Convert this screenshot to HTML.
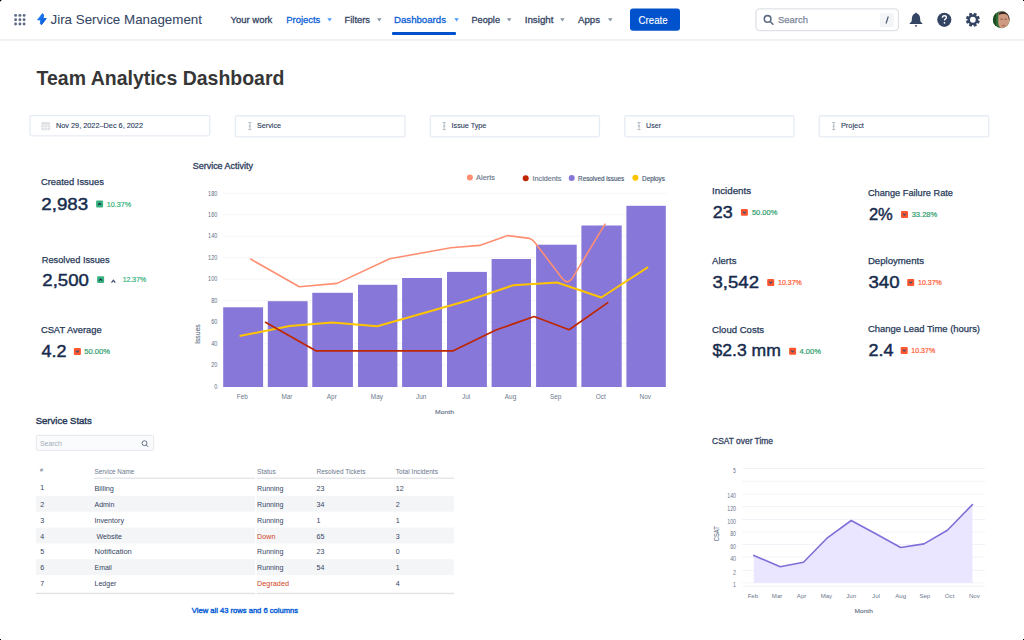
<!DOCTYPE html>
<html><head><meta charset="utf-8">
<style>
html,body{margin:0;padding:0;background:#fff;width:1024px;height:640px;overflow:hidden}
svg{display:block;font-family:"Liberation Sans",sans-serif}
</style></head>
<body>
<svg width="1024" height="640" viewBox="0 0 1024 640">
<defs>
<linearGradient id="bolt" x1="0" y1="0" x2="1" y2="1"><stop offset="0" stop-color="#2684FF"/><stop offset="1" stop-color="#0052CC"/></linearGradient>
</defs>
<rect width="1024" height="640" fill="#fff"/>
<rect x="0" y="39.3" width="1024" height="1.4" fill="#EBECF0"/>
<rect x="0" y="40.7" width="1024" height="0.6" fill="#F6F7F9"/>
<g fill="#5E6C84">
<circle cx="15.6" cy="15.4" r="1.45"/>
<circle cx="19.9" cy="15.4" r="1.45"/>
<circle cx="24.1" cy="15.4" r="1.45"/>
<circle cx="15.6" cy="19.75" r="1.45"/>
<circle cx="19.9" cy="19.75" r="1.45"/>
<circle cx="24.1" cy="19.75" r="1.45"/>
<circle cx="15.6" cy="24.0" r="1.45"/>
<circle cx="19.9" cy="24.0" r="1.45"/>
<circle cx="24.1" cy="24.0" r="1.45"/>
</g>
<path d="M42.4 13.6 L43.7 14.8 L43.1 18.5 L46.3 18.5 L41.5 24.8 L40.3 23.4 L40.8 19.9 L37.6 19.9 Z" fill="url(#bolt)" stroke="url(#bolt)" stroke-width="0.9" stroke-linejoin="round"/>
<text x="50.5" y="23.8" font-size="13" fill="#344563" stroke="#344563" stroke-width="0.05" textLength="151.5" lengthAdjust="spacingAndGlyphs">Jira Service Management</text>
<text x="230.6" y="22.85" font-size="9.6" fill="#344563" stroke="#344563" stroke-width="0.3" textLength="41.7" lengthAdjust="spacingAndGlyphs">Your work</text>
<text x="286.3" y="22.85" font-size="9.6" fill="#0C5FD6" stroke="#0C5FD6" stroke-width="0.3" textLength="34" lengthAdjust="spacingAndGlyphs">Projects</text>
<path d="M327.3 18.3 h4.6 l-2.3 3.3z" fill="#4C9AFF"/>
<text x="344.5" y="22.85" font-size="9.6" fill="#344563" stroke="#344563" stroke-width="0.3" textLength="25.5" lengthAdjust="spacingAndGlyphs">Filters</text>
<path d="M377.0 18.3 h4.6 l-2.3 3.3z" fill="#8993A4"/>
<text x="394" y="22.85" font-size="9.6" fill="#0C5FD6" stroke="#0C5FD6" stroke-width="0.3" textLength="52" lengthAdjust="spacingAndGlyphs">Dashboards</text>
<path d="M454.3 18.3 h4.6 l-2.3 3.3z" fill="#4C9AFF"/>
<text x="471.5" y="22.85" font-size="9.6" fill="#344563" stroke="#344563" stroke-width="0.3" textLength="28.5" lengthAdjust="spacingAndGlyphs">People</text>
<path d="M506.90000000000003 18.3 h4.6 l-2.3 3.3z" fill="#8993A4"/>
<text x="524.7" y="22.85" font-size="9.6" fill="#344563" stroke="#344563" stroke-width="0.3" textLength="28.8" lengthAdjust="spacingAndGlyphs">Insight</text>
<path d="M560.0999999999999 18.3 h4.6 l-2.3 3.3z" fill="#8993A4"/>
<text x="578" y="22.85" font-size="9.6" fill="#344563" stroke="#344563" stroke-width="0.3" textLength="22" lengthAdjust="spacingAndGlyphs">Apps</text>
<path d="M608.0 18.3 h4.6 l-2.3 3.3z" fill="#8993A4"/>
<rect x="392" y="32" width="64" height="3" rx="1" fill="#0052CC"/>
<rect x="630" y="8.5" width="50" height="22.3" rx="3" fill="#0052CC"/>
<text x="638.6" y="23.6" font-size="10" fill="#fff" stroke="#fff" stroke-width="0.12" textLength="29" lengthAdjust="spacingAndGlyphs">Create</text>
<rect x="755.9" y="8.8" width="142.6" height="21.8" rx="4" fill="#fff" stroke="#DFE1E6" stroke-width="1.3"/>
<circle cx="767.6" cy="18.9" r="3.3" fill="none" stroke="#5E6C84" stroke-width="1.6"/>
<path d="M770.2 21.5 L772.9 24.2" stroke="#5E6C84" stroke-width="1.6" stroke-linecap="round"/>
<text x="778" y="23" font-size="9.8" fill="#7A869A" stroke="#7A869A" stroke-width="0.25" textLength="30" lengthAdjust="spacingAndGlyphs">Search</text>
<rect x="880" y="13" width="14" height="14" rx="2" fill="#F4F5F7"/>
<path d="M888.3 16.5 L886 23.5" stroke="#42526E" stroke-width="1.1"/>
<g fill="#344563">
<path d="M916 12.4 L917.1 13.6 C918.9 14.3 919.9 15.9 920.1 18.2 L920.4 21.6 L922.3 23.3 L922.3 24.1 L909.7 24.1 L909.7 23.3 L911.6 21.6 L911.9 18.2 C912.1 15.9 913.1 14.3 914.9 13.6 Z"/>
<rect x="914.9" y="25.2" width="2.2" height="1.3" rx="0.3"/>
<circle cx="944.3" cy="19.8" r="7.1"/>
<path d="M978.13 20.26 L979.88 21.05 L978.74 23.80 L976.94 23.12 L976.22 23.84 L976.90 25.64 L974.15 26.78 L973.36 25.03 L972.34 25.03 L971.55 26.78 L968.80 25.64 L969.48 23.84 L968.76 23.12 L966.96 23.80 L965.82 21.05 L967.57 20.26 L967.57 19.24 L965.82 18.45 L966.96 15.70 L968.76 16.38 L969.48 15.66 L968.80 13.86 L971.55 12.72 L972.34 14.47 L973.36 14.47 L974.15 12.72 L976.90 13.86 L976.22 15.66 L976.94 16.38 L978.74 15.70 L979.88 18.45 L978.13 19.24Z"/>
</g>
<circle cx="972.85" cy="19.75" r="2.9" fill="#fff"/>
<path d="M942.4 17.7 c0 -1.3 0.9 -2.0 2.0 -2.0 c1.2 0 2.0 0.8 2.0 1.8 c0 1.3 -1.9 1.5 -1.9 2.9" fill="none" stroke="#fff" stroke-width="1.35"/>
<circle cx="944.5" cy="22.8" r="0.85" fill="#fff"/>
<clipPath id="av"><circle cx="1001.3" cy="19.75" r="8.4"/></clipPath>
<g clip-path="url(#av)">
<rect x="992" y="11" width="19" height="18" fill="#2E6B34"/>
<rect x="992" y="11" width="4" height="18" fill="#1E4A24"/>
<path d="M998.3 14 C999 12.3 1001 11.6 1003.5 11.6 C1007 11.6 1009.6 13.5 1009.8 17 L1009.8 22 C1009.5 26 1006.5 28.6 1003 28.6 C1000 28.6 998.3 26 998.2 22 Z" fill="#CF9A80"/>
<path d="M998.3 15.5 C998.8 12.5 1001 11.3 1003.8 11.3 C1007.3 11.3 1009.8 13.3 1010 17.5 L1010 19.5 L1008.6 19 C1008.5 16.2 1007.5 14.3 1004.8 14.1 C1002 14 999.5 14.3 998.3 15.5Z" fill="#3A2A24"/>
<ellipse cx="1003.6" cy="25.6" rx="2" ry="0.8" fill="#B06E62"/>
<path d="M1000.5 19.2 h2 M1004.6 19.2 h2" stroke="#5A3A30" stroke-width="0.8"/>
</g>
<text x="36.6" y="85.2" font-size="20.6" fill="#363636" font-weight="bold" textLength="247.8" lengthAdjust="spacingAndGlyphs">Team Analytics Dashboard</text>
<g fill="#fff" stroke="#E6ECF3" stroke-width="1.3">
<rect x="29.95" y="115.55" width="179.8" height="20.3" rx="1.5"/>
<rect x="235.35" y="115.75" width="169.6" height="21.1" rx="1.5"/>
<rect x="430.35" y="115.75" width="169.1" height="21.1" rx="1.5"/>
<rect x="624.85" y="115.75" width="169.1" height="21.1" rx="1.5"/>
<rect x="819.15" y="115.75" width="169.6" height="21.1" rx="1.5"/>
</g>
<text x="56" y="128.3" font-size="7.8" fill="#253858" stroke="#253858" stroke-width="0.1" textLength="87" lengthAdjust="spacingAndGlyphs">Nov 29, 2022–Dec 6, 2022</text>
<text x="257" y="128.1" font-size="7.8" fill="#253858" stroke="#253858" stroke-width="0.1" textLength="24" lengthAdjust="spacingAndGlyphs">Service</text>
<text x="451.5" y="128.1" font-size="7.8" fill="#253858" stroke="#253858" stroke-width="0.1" textLength="34.9" lengthAdjust="spacingAndGlyphs">Issue Type</text>
<text x="646.1" y="128.1" font-size="7.8" fill="#253858" stroke="#253858" stroke-width="0.1" textLength="14.9" lengthAdjust="spacingAndGlyphs">User</text>
<text x="840.9" y="128.1" font-size="7.8" fill="#253858" stroke="#253858" stroke-width="0.1" textLength="23" lengthAdjust="spacingAndGlyphs">Project</text>
<rect x="41.3" y="122.3" width="8.8" height="8" rx="1.3" fill="#DCDFE4"/>
<path d="M41.3 124.9 h8.8 M44.2 124.9 v5.4 M47.2 124.9 v5.4 M41.3 127.6 h8.8" stroke="#fff" stroke-width="0.55"/>
<path d="M43.3 121.6 v1.6 M48.1 121.6 v1.6" stroke="#DCDFE4" stroke-width="0.9"/>
<g stroke="#A5ADBA" stroke-width="0.8" fill="none">
<path d="M249.9 122.6 v7 M248.3 122.6 h3.2 M248.3 129.6 h3.2 M248.70000000000002 126.1 h2.4"/>
<path d="M444.2 122.6 v7 M442.59999999999997 122.6 h3.2 M442.59999999999997 129.6 h3.2 M443.0 126.1 h2.4"/>
<path d="M639 122.6 v7 M637.4 122.6 h3.2 M637.4 129.6 h3.2 M637.8 126.1 h2.4"/>
<path d="M833.7 122.6 v7 M832.1 122.6 h3.2 M832.1 129.6 h3.2 M832.5 126.1 h2.4"/>
</g>
<text x="192.8" y="169" font-size="8.6" fill="#344563" stroke="#344563" stroke-width="0.35" textLength="60.1" lengthAdjust="spacingAndGlyphs">Service Activity</text>
<g fill="#F4F5F7">
<rect x="223" y="385.90" width="443" height="1"/>
<rect x="223" y="364.43" width="443" height="1"/>
<rect x="223" y="342.97" width="443" height="1"/>
<rect x="223" y="321.50" width="443" height="1"/>
<rect x="223" y="300.04" width="443" height="1"/>
<rect x="223" y="278.57" width="443" height="1"/>
<rect x="223" y="257.10" width="443" height="1"/>
<rect x="223" y="235.64" width="443" height="1"/>
<rect x="223" y="214.17" width="443" height="1"/>
<rect x="223" y="192.71" width="443" height="1"/>
</g>
<text x="217.3" y="388.70" font-size="6.6" fill="#6B778C" stroke="#6B778C" stroke-width="0.05" text-anchor="end" textLength="3.07" lengthAdjust="spacingAndGlyphs">0</text>
<text x="217.3" y="367.23" font-size="6.6" fill="#6B778C" stroke="#6B778C" stroke-width="0.05" text-anchor="end" textLength="6.14" lengthAdjust="spacingAndGlyphs">20</text>
<text x="217.3" y="345.77" font-size="6.6" fill="#6B778C" stroke="#6B778C" stroke-width="0.05" text-anchor="end" textLength="6.14" lengthAdjust="spacingAndGlyphs">40</text>
<text x="217.3" y="324.30" font-size="6.6" fill="#6B778C" stroke="#6B778C" stroke-width="0.05" text-anchor="end" textLength="6.14" lengthAdjust="spacingAndGlyphs">60</text>
<text x="217.3" y="302.84" font-size="6.6" fill="#6B778C" stroke="#6B778C" stroke-width="0.05" text-anchor="end" textLength="6.14" lengthAdjust="spacingAndGlyphs">80</text>
<text x="217.3" y="281.37" font-size="6.6" fill="#6B778C" stroke="#6B778C" stroke-width="0.05" text-anchor="end" textLength="9.21" lengthAdjust="spacingAndGlyphs">100</text>
<text x="217.3" y="259.90" font-size="6.6" fill="#6B778C" stroke="#6B778C" stroke-width="0.05" text-anchor="end" textLength="9.21" lengthAdjust="spacingAndGlyphs">120</text>
<text x="217.3" y="238.44" font-size="6.6" fill="#6B778C" stroke="#6B778C" stroke-width="0.05" text-anchor="end" textLength="9.21" lengthAdjust="spacingAndGlyphs">140</text>
<text x="217.3" y="216.97" font-size="6.6" fill="#6B778C" stroke="#6B778C" stroke-width="0.05" text-anchor="end" textLength="9.21" lengthAdjust="spacingAndGlyphs">160</text>
<text x="217.3" y="195.51" font-size="6.6" fill="#6B778C" stroke="#6B778C" stroke-width="0.05" text-anchor="end" textLength="9.21" lengthAdjust="spacingAndGlyphs">180</text>
<g fill="#8777D9">
<rect x="223.2" y="307.3" width="39.9" height="79.7"/>
<rect x="267.8" y="301.2" width="39.8" height="85.8"/>
<rect x="312.3" y="292.8" width="40.6" height="94.2"/>
<rect x="358" y="284.8" width="39.4" height="102.2"/>
<rect x="402.1" y="278" width="39.9" height="109.0"/>
<rect x="447" y="271.9" width="39.9" height="115.1"/>
<rect x="491.6" y="259" width="39.4" height="128.0"/>
<rect x="536.1" y="244.7" width="40.6" height="142.3"/>
<rect x="581.4" y="225.5" width="40.3" height="161.5"/>
<rect x="626.4" y="205.8" width="39.4" height="181.2"/>
</g>
<text x="242.3" y="398.9" font-size="6.4" fill="#6B778C" text-anchor="middle">Feb</text>
<text x="286.9" y="398.9" font-size="6.4" fill="#6B778C" text-anchor="middle">Mar</text>
<text x="331.8" y="398.9" font-size="6.4" fill="#6B778C" text-anchor="middle">Apr</text>
<text x="376.9" y="398.9" font-size="6.4" fill="#6B778C" text-anchor="middle">May</text>
<text x="421.2" y="398.9" font-size="6.4" fill="#6B778C" text-anchor="middle">Jun</text>
<text x="466.1" y="398.9" font-size="6.4" fill="#6B778C" text-anchor="middle">Jul</text>
<text x="510.5" y="398.9" font-size="6.4" fill="#6B778C" text-anchor="middle">Aug</text>
<text x="555.6" y="398.9" font-size="6.4" fill="#6B778C" text-anchor="middle">Sep</text>
<text x="600.8" y="398.9" font-size="6.4" fill="#6B778C" text-anchor="middle">Oct</text>
<text x="645.3" y="398.9" font-size="6.4" fill="#6B778C" text-anchor="middle">Nov</text>
<text x="435.1" y="413.9" font-size="6.2" fill="#6B778C" stroke="#6B778C" stroke-width="0.15" textLength="18.8" lengthAdjust="spacingAndGlyphs">Month</text>
<text transform="translate(199.8 334.2) rotate(-90)" font-size="6.7" fill="#6B778C" stroke="#6B778C" stroke-width="0.15" text-anchor="middle">Issues</text>
<path d="M250.2,258.8 L299.3,286.7 L337,283.4 L389.7,258.8 L450.8,247.8 L479.6,245.4 L507.8,235.6 L529.5,238.4 Q532.5,239.2 534.5,242 L562.3,278.6 Q567.3,285.2 572.2,278.4 L605.3,223.7" fill="none" stroke="#FF8F73" stroke-width="1.6" stroke-linejoin="round"/>
<polyline points="239.6,336.1 289.6,326 332.2,322.5 377.2,326.3 468.1,300.5 513.2,285.3 557.2,282.5 601.3,297.5 648,267.2" fill="none" stroke="#FFC400" stroke-width="2" stroke-linejoin="round"/>
<polyline points="265,322 315.8,350.8 453.2,350.8 495.9,330 534.2,316.5 569.1,329.7 608.2,302.4" fill="none" stroke="#BF2600" stroke-width="1.7" stroke-linejoin="round"/>
<circle cx="469.9" cy="177.5" r="3" fill="#FF8F73"/>
<text x="476.1" y="179.8" font-size="7" fill="#6B778C" stroke="#6B778C" stroke-width="0.15" textLength="18.8" lengthAdjust="spacingAndGlyphs">Alerts</text>
<circle cx="525.7" cy="178.2" r="3" fill="#BF2600"/>
<text x="532.5" y="180.9" font-size="7" fill="#6B778C" stroke="#6B778C" stroke-width="0.15" textLength="29" lengthAdjust="spacingAndGlyphs">Incidents</text>
<circle cx="571.7" cy="177.9" r="3" fill="#8777D9"/>
<text x="578.1" y="180.6" font-size="6.8" fill="#505F79" stroke="#505F79" stroke-width="0.2" textLength="46" lengthAdjust="spacingAndGlyphs">Resolved issues</text>
<circle cx="635.4" cy="177.7" r="3" fill="#FFC400"/>
<text x="642.1" y="180.6" font-size="6.8" fill="#505F79" stroke="#505F79" stroke-width="0.2" textLength="22.8" lengthAdjust="spacingAndGlyphs">Deploys</text>
<text x="40.9" y="185.3" font-size="9.7" fill="#253858" stroke="#253858" stroke-width="0.25" textLength="63" lengthAdjust="spacingAndGlyphs">Created Issues</text>
<text x="41.3" y="209.8" font-size="17.3" fill="#172B4D" stroke="#172B4D" stroke-width="0.45" textLength="46.9" lengthAdjust="spacingAndGlyphs">2,983</text>
<rect x="96.1" y="200.6" width="7" height="6.9" rx="1" fill="#36B37E"/>
<path d="M98.00 204.95 L99.60 203.35 L101.20 204.95" fill="none" stroke="#172B4D" stroke-width="1.1"/>
<text x="106.8" y="206.9" font-size="7.5" fill="#36B37E" stroke="#36B37E" stroke-width="0.2" textLength="24.4" lengthAdjust="spacingAndGlyphs">10.37%</text>
<text x="41.8" y="262.9" font-size="9.7" fill="#253858" stroke="#253858" stroke-width="0.25" textLength="67.8" lengthAdjust="spacingAndGlyphs">Resolved Issues</text>
<text x="42.3" y="286.4" font-size="17.3" fill="#172B4D" stroke="#172B4D" stroke-width="0.45" textLength="46.6" lengthAdjust="spacingAndGlyphs">2,500</text>
<rect x="97.1" y="276.2" width="7" height="6.9" rx="1" fill="#36B37E"/>
<path d="M99.00 280.55 L100.60 278.95 L102.20 280.55" fill="none" stroke="#172B4D" stroke-width="1.1"/>
<text x="122.7" y="282.3" font-size="7.5" fill="#36B37E" stroke="#36B37E" stroke-width="0.2" textLength="23.6" lengthAdjust="spacingAndGlyphs">12.37%</text>
<text x="40.9" y="333" font-size="9.7" fill="#253858" stroke="#253858" stroke-width="0.25" textLength="60.7" lengthAdjust="spacingAndGlyphs">CSAT Average</text>
<text x="41.4" y="357.1" font-size="17.3" fill="#172B4D" stroke="#172B4D" stroke-width="0.45" textLength="25" lengthAdjust="spacingAndGlyphs">4.2</text>
<rect x="73.9" y="348" width="7" height="6.9" rx="1" fill="#FF5630"/>
<path d="M75.80 350.65 L77.40 352.25 L79.00 350.65" fill="none" stroke="#42526E" stroke-width="1.1"/>
<text x="84.2" y="353.7" font-size="7.5" fill="#2E9E6E" stroke="#2E9E6E" stroke-width="0.2" textLength="25.8" lengthAdjust="spacingAndGlyphs">50.00%</text>
<text x="712" y="193.9" font-size="9.7" fill="#253858" stroke="#253858" stroke-width="0.25" textLength="39.1" lengthAdjust="spacingAndGlyphs">Incidents</text>
<text x="712.8" y="218.1" font-size="17.3" fill="#172B4D" stroke="#172B4D" stroke-width="0.45" textLength="19.9" lengthAdjust="spacingAndGlyphs">23</text>
<rect x="740.9" y="208.9" width="7" height="6.9" rx="1" fill="#FF5630"/>
<path d="M742.80 211.55 L744.40 213.15 L746.00 211.55" fill="none" stroke="#42526E" stroke-width="1.1"/>
<text x="751.9" y="215" font-size="7.5" fill="#2E9E6E" stroke="#2E9E6E" stroke-width="0.2" textLength="25.4" lengthAdjust="spacingAndGlyphs">50.00%</text>
<text x="867.9" y="195.7" font-size="9.7" fill="#253858" stroke="#253858" stroke-width="0.25" textLength="85.1" lengthAdjust="spacingAndGlyphs">Change Failure Rate</text>
<text x="868.9" y="220.1" font-size="17.3" fill="#172B4D" stroke="#172B4D" stroke-width="0.45" textLength="23.9" lengthAdjust="spacingAndGlyphs">2%</text>
<rect x="901" y="211" width="7" height="6.9" rx="1" fill="#FF5630"/>
<path d="M902.90 213.65 L904.50 215.25 L906.10 213.65" fill="none" stroke="#42526E" stroke-width="1.1"/>
<text x="911.7" y="216.9" font-size="7.5" fill="#2E9E6E" stroke="#2E9E6E" stroke-width="0.2" textLength="25.5" lengthAdjust="spacingAndGlyphs">33.28%</text>
<text x="712.1" y="263.7" font-size="9.7" fill="#253858" stroke="#253858" stroke-width="0.25" textLength="24.3" lengthAdjust="spacingAndGlyphs">Alerts</text>
<text x="712.5" y="288.1" font-size="17.3" fill="#172B4D" stroke="#172B4D" stroke-width="0.45" textLength="46.5" lengthAdjust="spacingAndGlyphs">3,542</text>
<rect x="767.2" y="279" width="7" height="6.9" rx="1" fill="#FF5630"/>
<path d="M769.10 281.65 L770.70 283.25 L772.30 281.65" fill="none" stroke="#42526E" stroke-width="1.1"/>
<text x="778.1" y="285.3" font-size="7.5" fill="#FF5630" stroke="#FF5630" stroke-width="0.2" textLength="23.7" lengthAdjust="spacingAndGlyphs">10.37%</text>
<text x="867.9" y="263.7" font-size="9.7" fill="#253858" stroke="#253858" stroke-width="0.25" textLength="56.1" lengthAdjust="spacingAndGlyphs">Deployments</text>
<text x="868.5" y="288.1" font-size="17.3" fill="#172B4D" stroke="#172B4D" stroke-width="0.45" textLength="31.1" lengthAdjust="spacingAndGlyphs">340</text>
<rect x="907.2" y="279" width="7" height="6.9" rx="1" fill="#FF5630"/>
<path d="M909.10 281.65 L910.70 283.25 L912.30 281.65" fill="none" stroke="#42526E" stroke-width="1.1"/>
<text x="918.1" y="285.3" font-size="7.5" fill="#FF5630" stroke="#FF5630" stroke-width="0.2" textLength="23.7" lengthAdjust="spacingAndGlyphs">10.37%</text>
<text x="712.1" y="332.6" font-size="9.7" fill="#253858" stroke="#253858" stroke-width="0.25" textLength="52" lengthAdjust="spacingAndGlyphs">Cloud Costs</text>
<text x="712.5" y="356.1" font-size="17.3" fill="#172B4D" stroke="#172B4D" stroke-width="0.45" textLength="68.4" lengthAdjust="spacingAndGlyphs">$2.3 mm</text>
<rect x="789.1" y="347.8" width="7" height="6.9" rx="1" fill="#FF5630"/>
<path d="M791.00 350.45 L792.60 352.05 L794.20 350.45" fill="none" stroke="#42526E" stroke-width="1.1"/>
<text x="799.6" y="353.8" font-size="7.5" fill="#2E9E6E" stroke="#2E9E6E" stroke-width="0.2" textLength="21.3" lengthAdjust="spacingAndGlyphs">4.00%</text>
<text x="867.9" y="332" font-size="9.7" fill="#253858" stroke="#253858" stroke-width="0.25" textLength="112.1" lengthAdjust="spacingAndGlyphs">Change Lead Time (hours)</text>
<text x="868.5" y="356.1" font-size="17.3" fill="#172B4D" stroke="#172B4D" stroke-width="0.45" textLength="25" lengthAdjust="spacingAndGlyphs">2.4</text>
<rect x="900.7" y="347" width="7" height="6.9" rx="1" fill="#FF5630"/>
<path d="M902.60 349.65 L904.20 351.25 L905.80 349.65" fill="none" stroke="#42526E" stroke-width="1.1"/>
<text x="911.3" y="352.9" font-size="7.5" fill="#FF5630" stroke="#FF5630" stroke-width="0.2" textLength="23.9" lengthAdjust="spacingAndGlyphs">10.37%</text>
<path d="M111.5 282.6 L113.4 280.3 L115.3 282.6" fill="none" stroke="#42526E" stroke-width="1.3"/>
<text x="35.7" y="423.7" font-size="9.6" fill="#253858" stroke="#253858" stroke-width="0.4" textLength="56.1" lengthAdjust="spacingAndGlyphs">Service Stats</text>
<rect x="36.3" y="435.3" width="117.3" height="15.1" rx="1.5" fill="#FAFBFC" stroke="#DFE1E6" stroke-width="0.8"/>
<text x="39.9" y="446.2" font-size="7.4" fill="#A5ADBA" textLength="22.1" lengthAdjust="spacingAndGlyphs">Search</text>
<circle cx="144.5" cy="443.2" r="2.45" fill="none" stroke="#505F79" stroke-width="0.85"/><path d="M146.3 445 L147.9 446.6" stroke="#505F79" stroke-width="0.9" stroke-linecap="round"/>
<rect x="36" y="495.85" width="219.1" height="15.85" fill="#F4F5F7"/>
<rect x="256.7" y="495.85" width="197.3" height="15.85" fill="#F4F5F7"/>
<rect x="36" y="527.55" width="219.1" height="15.85" fill="#F4F5F7"/>
<rect x="256.7" y="527.55" width="197.3" height="15.85" fill="#F4F5F7"/>
<rect x="36" y="559.25" width="219.1" height="15.85" fill="#F4F5F7"/>
<rect x="256.7" y="559.25" width="197.3" height="15.85" fill="#F4F5F7"/>
<rect x="94.1" y="477.6" width="161" height="1.2" fill="#DFE1E6"/>
<rect x="256.7" y="477.6" width="197.3" height="1.2" fill="#DFE1E6"/>
<rect x="36" y="592.8" width="219.1" height="1.3" fill="#DFE1E6"/>
<rect x="256.7" y="592.8" width="197.3" height="1.3" fill="#DFE1E6"/>
<text x="40" y="472" font-size="5.5" fill="#6B778C">#</text>
<text x="94.5" y="473.5" font-size="6.4" fill="#6B778C" textLength="39.7" lengthAdjust="spacingAndGlyphs">Service Name</text>
<text x="257.1" y="473.5" font-size="6.4" fill="#6B778C" textLength="18.7" lengthAdjust="spacingAndGlyphs">Status</text>
<text x="316.5" y="473.5" font-size="6.4" fill="#6B778C" textLength="49" lengthAdjust="spacingAndGlyphs">Resolved Tickets</text>
<text x="395.8" y="473.5" font-size="6.4" fill="#6B778C" textLength="42.2" lengthAdjust="spacingAndGlyphs">Total Incidents</text>
<text x="40.2" y="489.7" font-size="7.1" fill="#344563">1</text>
<text x="94.5" y="491.20" font-size="7.1" fill="#344563" textLength="19.4" lengthAdjust="spacingAndGlyphs">Billing</text>
<text x="257.1" y="491.20" font-size="7.1" fill="#344563" textLength="26.4" lengthAdjust="spacingAndGlyphs">Running</text>
<text x="316.6" y="491.20" font-size="7.1" fill="#344563">23</text>
<text x="395.8" y="491.20" font-size="7.1" fill="#344563">12</text>
<text x="40.2" y="507.20" font-size="7.1" fill="#344563">2</text>
<text x="94.5" y="507.20" font-size="7.1" fill="#344563" textLength="19.8" lengthAdjust="spacingAndGlyphs">Admin</text>
<text x="257.1" y="507.20" font-size="7.1" fill="#344563" textLength="26.4" lengthAdjust="spacingAndGlyphs">Running</text>
<text x="316.6" y="507.20" font-size="7.1" fill="#344563">34</text>
<text x="395.8" y="507.20" font-size="7.1" fill="#344563">2</text>
<text x="40.2" y="522.92" font-size="7.1" fill="#344563">3</text>
<text x="94.5" y="522.92" font-size="7.1" fill="#344563" textLength="29.6" lengthAdjust="spacingAndGlyphs">Inventory</text>
<text x="257.1" y="522.92" font-size="7.1" fill="#344563" textLength="26.4" lengthAdjust="spacingAndGlyphs">Running</text>
<text x="316.6" y="522.92" font-size="7.1" fill="#344563">1</text>
<text x="395.8" y="522.92" font-size="7.1" fill="#344563">1</text>
<text x="40.2" y="538.64" font-size="7.1" fill="#344563">4</text>
<text x="96.5" y="538.64" font-size="7.1" fill="#344563" textLength="25.5" lengthAdjust="spacingAndGlyphs">Website</text>
<text x="257.1" y="538.64" font-size="7.1" fill="#CF4422" textLength="18.3" lengthAdjust="spacingAndGlyphs">Down</text>
<text x="316.6" y="538.64" font-size="7.1" fill="#344563">65</text>
<text x="395.8" y="538.64" font-size="7.1" fill="#344563">3</text>
<text x="40.2" y="554.36" font-size="7.1" fill="#344563">5</text>
<text x="94.5" y="554.36" font-size="7.1" fill="#344563" textLength="37.3" lengthAdjust="spacingAndGlyphs">Notification</text>
<text x="257.1" y="554.36" font-size="7.1" fill="#344563" textLength="26.4" lengthAdjust="spacingAndGlyphs">Running</text>
<text x="316.6" y="554.36" font-size="7.1" fill="#344563">23</text>
<text x="395.8" y="554.36" font-size="7.1" fill="#344563">0</text>
<text x="40.2" y="570.08" font-size="7.1" fill="#344563">6</text>
<text x="94.5" y="570.08" font-size="7.1" fill="#344563" textLength="17.4" lengthAdjust="spacingAndGlyphs">Email</text>
<text x="257.1" y="570.08" font-size="7.1" fill="#344563" textLength="26.4" lengthAdjust="spacingAndGlyphs">Running</text>
<text x="316.6" y="570.08" font-size="7.1" fill="#344563">54</text>
<text x="395.8" y="570.08" font-size="7.1" fill="#344563">1</text>
<text x="40.2" y="585.80" font-size="7.1" fill="#344563">7</text>
<text x="94.5" y="585.80" font-size="7.1" fill="#344563" textLength="21.9" lengthAdjust="spacingAndGlyphs">Ledger</text>
<text x="257.1" y="585.80" font-size="7.1" fill="#CF4422" textLength="31.9" lengthAdjust="spacingAndGlyphs">Degraded</text>
<text x="395.8" y="585.80" font-size="7.1" fill="#344563">4</text>
<text x="191.8" y="612.6" font-size="7.6" fill="#0A5FD8" stroke="#0A5FD8" stroke-width="0.4" textLength="106.3" lengthAdjust="spacingAndGlyphs">View all 43 rows and 6 columns</text>
<text x="712.1" y="444" font-size="8.4" fill="#344563" stroke="#344563" stroke-width="0.3" textLength="60.9" lengthAdjust="spacingAndGlyphs">CSAT over Time</text>
<g fill="#F0F4F8">
<rect x="742.2" y="468.00" width="243.2" height="1"/>
<rect x="742.2" y="480.70" width="243.2" height="1"/>
<rect x="742.2" y="493.60" width="243.2" height="1"/>
<rect x="742.2" y="506.20" width="243.2" height="1"/>
<rect x="742.2" y="519.00" width="243.2" height="1"/>
<rect x="742.2" y="531.60" width="243.2" height="1"/>
<rect x="742.2" y="544.00" width="243.2" height="1"/>
<rect x="742.2" y="556.60" width="243.2" height="1"/>
<rect x="742.2" y="569.90" width="243.2" height="1"/>
<rect x="742.2" y="582.40" width="243.2" height="1"/>
<rect x="742.2" y="585.70" width="243.2" height="1"/>
</g>
<text x="736" y="472.65" font-size="6.5" fill="#6B778C" text-anchor="end" textLength="2.93" lengthAdjust="spacingAndGlyphs">5</text>
<text x="736" y="498.20" font-size="6.5" fill="#6B778C" text-anchor="end" textLength="8.79" lengthAdjust="spacingAndGlyphs">140</text>
<text x="736" y="510.80" font-size="6.5" fill="#6B778C" text-anchor="end" textLength="8.79" lengthAdjust="spacingAndGlyphs">120</text>
<text x="736" y="523.60" font-size="6.5" fill="#6B778C" text-anchor="end" textLength="8.79" lengthAdjust="spacingAndGlyphs">100</text>
<text x="736" y="536.20" font-size="6.5" fill="#6B778C" text-anchor="end" textLength="5.86" lengthAdjust="spacingAndGlyphs">80</text>
<text x="736" y="548.60" font-size="6.5" fill="#6B778C" text-anchor="end" textLength="5.86" lengthAdjust="spacingAndGlyphs">60</text>
<text x="736" y="561.20" font-size="6.5" fill="#6B778C" text-anchor="end" textLength="5.86" lengthAdjust="spacingAndGlyphs">40</text>
<text x="736" y="574.50" font-size="6.5" fill="#6B778C" text-anchor="end" textLength="2.93" lengthAdjust="spacingAndGlyphs">2</text>
<text x="736" y="587.30" font-size="6.5" fill="#6B778C" text-anchor="end" textLength="2.93" lengthAdjust="spacingAndGlyphs">1</text>
<path d="M753.8,582.9 L753.8,555.4 L780.2,566.8 L803.5,562.2 L827.4,537.8 L851.2,520.5 L876.2,534 L900.6,547.5 L924,543.9 L947.4,530.2 L972.4,504.6 L972.4,582.9 Z" fill="#EAE6FF"/>
<polyline points="753.8,555.4 780.2,566.8 803.5,562.2 827.4,537.8 851.2,520.5 876.2,534 900.6,547.5 924,543.9 947.4,530.2 972.4,504.6" fill="none" stroke="#7F6FD8" stroke-width="1.6" stroke-linejoin="round" stroke-linecap="round"/>
<text x="752.9" y="597.5" font-size="6.1" fill="#6B778C" text-anchor="middle">Feb</text>
<text x="777.1" y="597.5" font-size="6.1" fill="#6B778C" text-anchor="middle">Mar</text>
<text x="801.6" y="597.5" font-size="6.1" fill="#6B778C" text-anchor="middle">Apr</text>
<text x="826.4" y="597.5" font-size="6.1" fill="#6B778C" text-anchor="middle">May</text>
<text x="851.2" y="597.5" font-size="6.1" fill="#6B778C" text-anchor="middle">Jun</text>
<text x="876" y="597.5" font-size="6.1" fill="#6B778C" text-anchor="middle">Jul</text>
<text x="900.6" y="597.5" font-size="6.1" fill="#6B778C" text-anchor="middle">Aug</text>
<text x="924.8" y="597.5" font-size="6.1" fill="#6B778C" text-anchor="middle">Sep</text>
<text x="949.6" y="597.5" font-size="6.1" fill="#6B778C" text-anchor="middle">Oct</text>
<text x="974.4" y="597.5" font-size="6.1" fill="#6B778C" text-anchor="middle">Nov</text>
<text x="854.5" y="613" font-size="6.2" fill="#6B778C" stroke="#6B778C" stroke-width="0.15" textLength="18.3" lengthAdjust="spacingAndGlyphs">Month</text>
<text transform="translate(719.3 533.7) rotate(-90)" font-size="6.8" fill="#6B778C" stroke="#6B778C" stroke-width="0.12" text-anchor="middle" textLength="15" lengthAdjust="spacingAndGlyphs">CSAT</text>
<rect x="0" y="0" width="1" height="1" fill="#000"/>
<rect x="1023" y="0" width="1" height="1" fill="#000"/>
<rect x="0" y="639" width="1" height="1" fill="#000"/>
<rect x="1023" y="639" width="1" height="1" fill="#000"/>
<rect x="1" y="0" width="0.5" height="1" fill="#000" opacity="0.6"/><rect x="0" y="1" width="1" height="0.5" fill="#000" opacity="0.6"/>
</svg>
</body></html>
